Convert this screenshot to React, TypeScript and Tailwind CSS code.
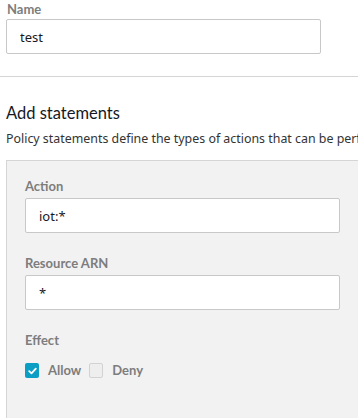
import React, { useState } from 'react'

const labelCls = "block text-[13px] font-bold text-[#7d7d7d] font-['Lato',sans-serif] leading-[16px]"
const inputCls = "w-full h-[35px] bg-white border border-[#c8c8c8] rounded-[2px] px-[13px] text-[13px] text-[#16191f] font-['Noto_Sans',sans-serif] outline-none"

const CheckBox: React.FC<{ checked: boolean; label: string; onChange: () => void }> = ({ checked, label, onChange }) => (
  <label className="flex items-center cursor-pointer" onClick={onChange}>
    {checked ? (
      <span className="w-[14px] h-[15px] rounded-[2px] bg-[#0a9ec5] flex items-center justify-center">
        <svg width="9" height="8" viewBox="0 0 9 8" fill="none">
          <path d="M1.2 4.2 L3.5 6.3 L7.8 1.6" stroke="white" strokeWidth="1.8" strokeLinecap="round" strokeLinejoin="round" />
        </svg>
      </span>
    ) : (
      <span className="w-[14px] h-[15px] rounded-[2px] bg-[#eeeeee] border border-[#d2d2d2]" />
    )}
    <span className="ml-[9px] text-[13px] font-bold text-[#7d7d7d] font-['Lato',sans-serif]">{label}</span>
  </label>
)

export default function App() {
  const [name, setName] = useState('test')
  const [action, setAction] = useState('iot:*')
  const [resource, setResource] = useState('*')
  const [effect, setEffect] = useState<'allow' | 'deny'>('allow')

  return (
    <div className="w-[358px] h-[418px] bg-white overflow-hidden font-['Noto_Sans',sans-serif]">
      {/* Name */}
      <div className="pt-[1px] pl-[7px]">
        <span className={labelCls}>Name</span>
        <div className="mt-[2px] w-[315px] -ml-[1px]">
          <input className={inputCls} value={name} onChange={e => setName(e.target.value)} />
        </div>
      </div>

      <div className="mt-[22px] border-t border-[#d5d5d5]" />

      {/* Statements */}
      <div className="pl-[6px] pt-[24px]">
        <h2 className="text-[16.5px] leading-[24px] text-[#16191f] whitespace-nowrap font-['Lato',sans-serif]">Add statements</h2>
        <p className="mt-[5px] text-[12.4px] leading-[18px] text-[#333] whitespace-nowrap">
          Policy statements define the types of actions that can be performed by a principal.
        </p>

        <div className="mt-[12px] w-[400px] h-[300px] bg-[#f2f2f2] border border-[#d5d5d5] pl-[18px] pt-[17px]">
          <span className={labelCls}>Action</span>
          <div className="mt-[4px] w-[315px]">
            <input className={inputCls} value={action} onChange={e => setAction(e.target.value)} />
          </div>

          <span className={`${labelCls} mt-[22px]`}>Resource ARN</span>
          <div className="mt-[4px] w-[315px]">
            <input className={inputCls} value={resource} onChange={e => setResource(e.target.value)} />
          </div>

          <span className={`${labelCls} mt-[22px]`}>Effect</span>
          <div className="mt-[13px] flex items-center gap-[8px]">
            <CheckBox checked={effect === 'allow'} label="Allow" onChange={() => setEffect('allow')} />
            <CheckBox checked={effect === 'deny'} label="Deny" onChange={() => setEffect('deny')} />
          </div>
        </div>
      </div>
    </div>
  )
}
